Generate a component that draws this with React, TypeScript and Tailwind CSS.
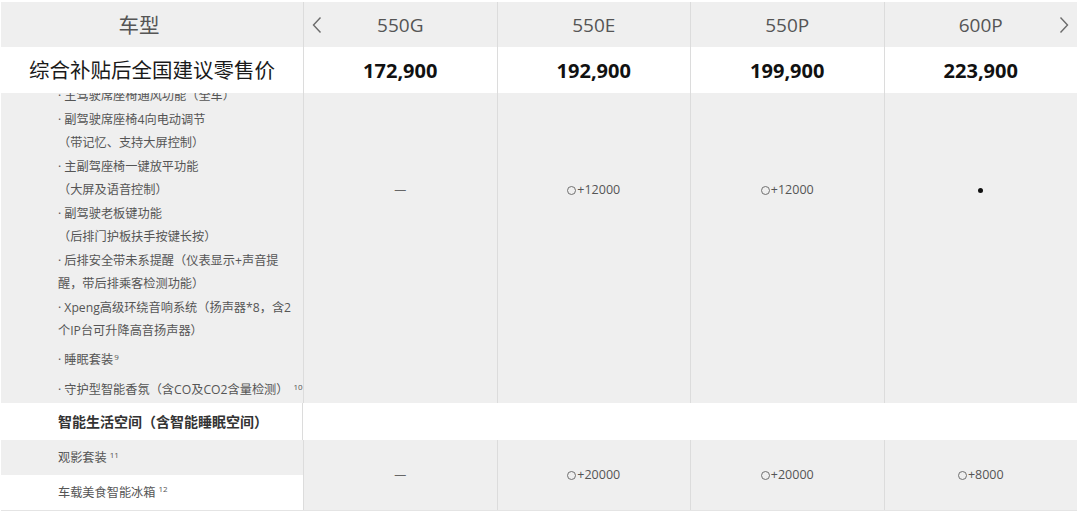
import React from "react";

const models = [
  { name: "550G", price: "172,900" },
  { name: "550E", price: "192,900" },
  { name: "550P", price: "199,900" },
  { name: "600P", price: "223,900" },
];

// lines of the long "comfort" row; the first one sits half under the sticky header
const comfortLines: { text: string; sup?: string; gap?: string }[] = [
  { text: "· 主驾驶席座椅通风功能（全车）" },
  { text: "· 副驾驶席座椅4向电动调节" },
  { text: "（带记忆、支持大屏控制）" },
  { text: "· 主副驾座椅一键放平功能" },
  { text: "（大屏及语音控制）" },
  { text: "· 副驾驶老板键功能" },
  { text: "（后排门护板扶手按键长按）" },
  { text: "· 后排安全带未系提醒（仪表显示+声音提" },
  { text: "醒，带后排乘客检测功能）" },
  { text: "· Xpeng高级环绕音响系统（扬声器*8，含2" },
  { text: "个IP台可升降高音扬声器）" },
  { text: "· 睡眠套装", sup: "9", gap: "mt-[5.5px]" },
  { text: "· 守护型智能香氛（含CO及CO2含量检测）", sup: "10", gap: "mt-[6.5px]" },
];

const Chevron = ({ dir }: { dir: "left" | "right" }) => (
  <svg width="10" height="18" viewBox="0 0 10 18" fill="none" stroke="#6b6b6b" strokeWidth="1.4">
    {dir === "left" ? <polyline points="8.5,1.5 1.5,9 8.5,16.5" /> : <polyline points="1.5,1.5 8.5,9 1.5,16.5" />}
  </svg>
);

const Option = ({ value }: { value: string }) => (
  <span className="inline-flex items-center text-[12.5px] text-[#555]">
    <span className="inline-block w-[9px] h-[9px] rounded-full border border-[#707070] mr-[1px]" />+{value}
  </span>
);

const Cell = ({ children }: { children?: React.ReactNode }) => (
  <div className="flex items-center justify-center border-l border-[#dcdcdc]">{children}</div>
);

const App = () => {
  return (
    <div className="w-[1080px] h-[513px] bg-white pt-[2px] pl-[1px] overflow-hidden font-['Open_Sans','Noto_Sans_CJK_SC',sans-serif]">
      <div className="w-[1076px]">
        {/* Header */}
        <div className="relative grid grid-cols-[302px_repeat(4,1fr)] h-[45px] bg-[#efefef]">
          <div className="flex items-center justify-center pr-[26px] text-[20.5px] leading-[28px] text-[#555]">车型</div>
          {models.map((m) => (
            <Cell key={m.name}>
              <span className="text-[19px] leading-[26px] text-[#555]">{m.name}</span>
            </Cell>
          ))}
          <button className="absolute left-[311px] top-[14px]">
            <Chevron dir="left" />
          </button>
          <button className="absolute right-[8px] top-[14px]">
            <Chevron dir="right" />
          </button>
        </div>

        {/* Price */}
        <div className="grid grid-cols-[302px_repeat(4,1fr)] h-[46px] bg-white">
          <div className="flex items-center justify-center text-[20.5px] leading-[28px] text-[#1a1a1a]">综合补贴后全国建议零售价</div>
          {models.map((m) => (
            <Cell key={m.name}>
              <span className="text-[20px] leading-[27px] font-bold text-[#111]">{m.price}</span>
            </Cell>
          ))}
        </div>

        {/* Scrolled body */}
        <div className="h-[310px] overflow-hidden bg-[#efefef]">
          <div className="grid grid-cols-[302px_repeat(4,1fr)] h-[426px] -mt-[116px]">
            <div className="flex flex-col justify-end pl-[57px] pb-[1.25px] text-[12.2px] text-[#555]">
              {comfortLines.map((l, i) => (
                <div key={i} className={`h-[23.5px] leading-[23.5px] whitespace-nowrap ${l.gap || ""}`}>
                  {l.text}
                  {l.sup && <sup className={`text-[8px] ${l.sup === "10" ? "ml-[5px]" : "ml-[1px]"}`}>{l.sup}</sup>}
                </div>
              ))}
            </div>
            <Cell>
              <span className="text-[12px] text-[#666]">—</span>
            </Cell>
            <Cell>
              <Option value="12000" />
            </Cell>
            <Cell>
              <Option value="12000" />
            </Cell>
            <Cell>
              <span className="inline-block w-[5px] h-[5px] rounded-full bg-[#111]" />
            </Cell>
          </div>
        </div>

        {/* Section title */}
        <div className="grid grid-cols-[302px_1fr] h-[37px] bg-white">
          <div className="flex items-center pl-[57px] text-[14px] font-bold text-[#333] border-r border-[#dcdcdc]">
            智能生活空间（含智能睡眠空间）
          </div>
          <div />
        </div>

        {/* Options */}
        <div className="grid grid-cols-[302px_repeat(4,1fr)] grid-rows-[35px_35px] border-b border-[#e4e4e4]">
          <div className="flex items-center pl-[57px] pt-[2px] bg-[#efefef] text-[12.2px] text-[#555]">
            观影套装<sup className="text-[8px] ml-[3px]">11</sup>
          </div>
          <div className="row-span-2 flex items-center justify-center bg-[#efefef] border-l border-[#dcdcdc]">
            <span className="text-[12px] text-[#666]">—</span>
          </div>
          <div className="row-span-2 flex items-center justify-center bg-[#efefef] border-l border-[#dcdcdc]">
            <Option value="20000" />
          </div>
          <div className="row-span-2 flex items-center justify-center bg-[#efefef] border-l border-[#dcdcdc]">
            <Option value="20000" />
          </div>
          <div className="row-span-2 flex items-center justify-center bg-[#efefef] border-l border-[#dcdcdc]">
            <Option value="8000" />
          </div>
          <div className="flex items-center pl-[57px] pt-[1px] bg-white text-[12.2px] text-[#555]">
            车载美食智能冰箱<sup className="text-[8px] ml-[3px]">12</sup>
          </div>
        </div>
      </div>
    </div>
  );
};

export default App;
